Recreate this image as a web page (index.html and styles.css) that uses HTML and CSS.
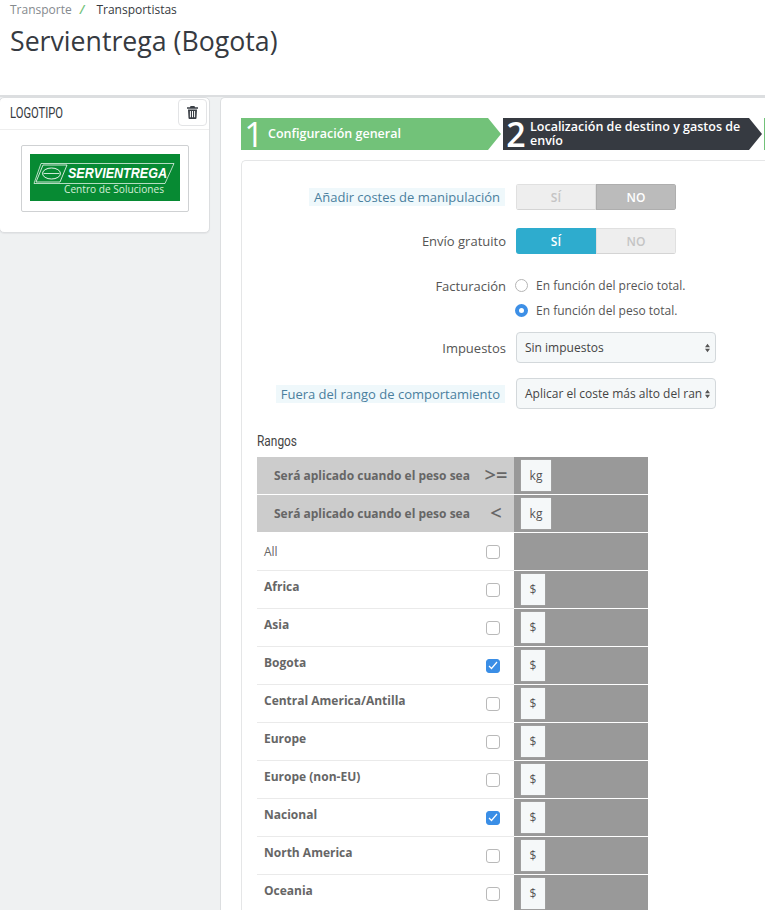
FILE: index.html
```html
<!DOCTYPE html>
<html lang="es">
<head>
<meta charset="utf-8">
<title>Servientrega (Bogota)</title>
<link rel="stylesheet" href="styles.css">
</head>
<body>
<header class="page-head">
  <nav class="crumbs"><span class="crumb-muted">Transporte</span><span class="crumb-sep">/</span><span>Transportistas</span></nav>
  <h1 class="title">Servientrega (Bogota)</h1>
</header>
<div class="layout">
  <aside class="logo-panel">
    <div class="logo-head">
      <span class="logo-title">LOGOTIPO</span>
      <button class="trash" type="button" aria-label="Eliminar">
        <svg width="11" height="13" viewBox="0 0 11 13"><path fill="#3a3f45" d="M3.6 0h3.800l.7 1.300H11v1.400H0V1.300h2.900zM1 3.400h9l-.5 8.600a1 1 0 0 1-1 1h-6a1 1 0 0 1-1-1zm1.900 1.500v6.400h1V4.900zm2.100 0v6.400h1V4.900zm2.100 0v6.400h1V4.900z"/></svg>
      </button>
    </div>
    <div class="logo-body">
      <div class="logo-frame">
        <svg class="logo-svg" width="150" height="47" viewBox="0 0 150 47">
          <rect width="150" height="47" fill="#078a33"/>
          <path d="M11 9.500h133l-9 20H4z" fill="none" stroke="#fff" stroke-width=".7"/>
          <path d="M13 11h24l-7 17H6z" fill="none" stroke="#fff" stroke-width=".8"/>
          <ellipse cx="21.500" cy="19.500" rx="9" ry="5.500" fill="none" stroke="#fff" stroke-width=".9"/>
          <path d="M13.500 19.500h16" stroke="#fff" stroke-width=".8"/>
          <text x="38" y="24" class="logo-name" textLength="99" lengthAdjust="spacingAndGlyphs">SERVIENTREGA</text>
          <text x="34" y="38.500" class="logo-sub" textLength="100" lengthAdjust="spacingAndGlyphs">Centro de Soluciones</text>
        </svg>
      </div>
    </div>
  </aside>
  <main class="main-panel">
    <div class="steps">
      <div class="step step-green"><span class="step-num">1</span><span class="step-text">Configuración general</span></div>
      <div class="step step-dark"><span class="step-num">2</span><span class="step-text step-text-tight">Localización de destino y gastos de envío</span></div>
      <div class="step-next"></div>
    </div>
    <section class="form-card">
      <div class="form-row row-toggle-1">
        <div class="label-cell"><span class="label hint">Añadir costes de manipulación</span></div>
        <div class="toggle"><span class="seg seg-off">SÍ</span><span class="seg seg-no">NO</span></div>
      </div>
      <div class="form-row row-toggle-2">
        <div class="label-cell"><span class="label">Envío gratuito</span></div>
        <div class="toggle"><span class="seg seg-yes">SÍ</span><span class="seg seg-off">NO</span></div>
      </div>
      <div class="form-row row-radio">
        <div class="label-cell"><span class="label">Facturación</span></div>
        <div class="radios">
          <div class="radio-line"><span class="radio"></span>En función del precio total.</div>
          <div class="radio-line"><span class="radio radio-on"></span>En función del peso total.</div>
        </div>
      </div>
      <div class="form-row row-select-1">
        <div class="label-cell"><span class="label">Impuestos</span></div>
        <div class="select"><span class="select-text">Sin impuestos</span><svg class="arrows" width="5" height="10" viewBox="0 0 6 10"><path fill="#555" d="M3 0l3 4H0zM3 10L0 6h6z"/></svg></div>
      </div>
      <div class="form-row row-select-2">
        <div class="label-cell"><span class="label hint">Fuera del rango de comportamiento</span></div>
        <div class="select"><span class="select-text">Aplicar el coste más alto del ran</span><svg class="arrows" width="5" height="10" viewBox="0 0 6 10"><path fill="#555" d="M3 0l3 4H0zM3 10L0 6h6z"/></svg></div>
      </div>
      <h2 class="ranges-title">Rangos</h2>
      <div class="ranges">
        <div class="r-row r-head"><div class="r-left"><span class="r-condition">Será aplicado cuando el peso sea</span><span class="r-op">&gt;=</span></div><div class="r-right"><span class="unit unit-kg">kg</span></div></div>
        <div class="r-row r-head"><div class="r-left"><span class="r-condition">Será aplicado cuando el peso sea</span><span class="r-op">&lt;</span></div><div class="r-right"><span class="unit unit-kg">kg</span></div></div>
        <div class="r-row"><div class="r-left"><span class="r-all">All</span><span class="check"></span></div><div class="r-right"></div></div>
        <div class="r-row"><div class="r-left"><span class="r-zone">Africa</span><span class="check"></span></div><div class="r-right"><span class="unit">$</span></div></div>
        <div class="r-row"><div class="r-left"><span class="r-zone">Asia</span><span class="check"></span></div><div class="r-right"><span class="unit">$</span></div></div>
        <div class="r-row"><div class="r-left"><span class="r-zone">Bogota</span><span class="check check-on"><svg width="10" height="9" viewBox="0 0 10 9"><path d="M1 5l2.500 2.500L9 1" fill="none" stroke="#fff" stroke-width="1.200"/></svg></span></div><div class="r-right"><span class="unit">$</span></div></div>
        <div class="r-row"><div class="r-left"><span class="r-zone">Central America/Antilla</span><span class="check"></span></div><div class="r-right"><span class="unit">$</span></div></div>
        <div class="r-row"><div class="r-left"><span class="r-zone">Europe</span><span class="check"></span></div><div class="r-right"><span class="unit">$</span></div></div>
        <div class="r-row"><div class="r-left"><span class="r-zone">Europe (non-EU)</span><span class="check"></span></div><div class="r-right"><span class="unit">$</span></div></div>
        <div class="r-row"><div class="r-left"><span class="r-zone">Nacional</span><span class="check check-on"><svg width="10" height="9" viewBox="0 0 10 9"><path d="M1 5l2.500 2.500L9 1" fill="none" stroke="#fff" stroke-width="1.200"/></svg></span></div><div class="r-right"><span class="unit">$</span></div></div>
        <div class="r-row"><div class="r-left"><span class="r-zone">North America</span><span class="check"></span></div><div class="r-right"><span class="unit">$</span></div></div>
        <div class="r-row"><div class="r-left"><span class="r-zone">Oceania</span><span class="check"></span></div><div class="r-right"><span class="unit">$</span></div></div>
      </div>
    </section>
  </main>
</div>
</body>
</html>
```
FILE: styles.css
```css
* { box-sizing: border-box; }
html, body { margin: 0; padding: 0; height: 910px; overflow: hidden; }
body { background: #eff1f2; font-family: "Open Sans", "Liberation Sans", sans-serif; color: #555; font-size: 12px; }

.page-head { height: 97px; background: #fff; border-bottom: 2px solid #dcdee0; padding: 2px 10px 0; }
.crumbs { font-size: 12px; line-height: 15px; color: #363a41; }
.crumb-muted { color: #858a8e; }
.crumb-sep { color: #72c279; font-weight: 600; margin: 0 12px 0 8px; font-style: italic; }
.title { margin: 4px 0 0; font-size: 26.700px; line-height: 40px; font-weight: 400; color: #363a41; }

.layout { display: flex; align-items: flex-start; }
.logo-panel { flex: none; width: 211px; height: 136px; background: #fff; border: 1px solid #dcdee0; border-radius: 5px; margin-left: -1px; box-shadow: 0 1px 1px #e3e5e7; }
.logo-head { height: 32px; display: flex; align-items: center; justify-content: space-between; padding: 0 2px 2px 10px; border-bottom: 1px solid #eeeeee; }
.logo-title { display: inline-block; transform: scaleX(.8); transform-origin: left center; font-family: "Roboto", sans-serif; font-weight: 400; font-size: 14px; color: #363a41; }
.trash { width: 29px; height: 27px; padding: 0; display: flex; align-items: center; justify-content: center; background: #fff; border: 1px solid #e3e4e6; border-radius: 4px; }
.logo-body { padding: 15px 0 0 21px; }
.logo-frame { width: 168px; height: 67px; padding: 8px; border: 1px solid #cfd1d3; border-radius: 2px; }
.logo-svg { display: block; }
.logo-name { font: italic 700 14px "Liberation Sans", sans-serif; fill: #fff; }
.logo-sub { font: 400 10px "Open Sans", sans-serif; fill: #d6efd9; }

.main-panel { flex: none; margin-left: 10px; width: 545px; height: 813px; overflow: hidden; padding: 20px 0 0 20px; background: #fff; border: 1px solid #dcdee0; border-right: 0; border-bottom: 0; border-radius: 5px 0 0 0; }
.steps { display: flex; height: 32px; }
.step { display: flex; align-items: center; color: #fff; flex: none; padding-left: 3px; }
.step-green { width: 260px; background: #72c279; clip-path: polygon(0 0, 247px 0, 260px 50%, 247px 100%, 0 100%); }
.step-dark { width: 259px; margin-left: 2px; background: #363a41; clip-path: polygon(0 0, 246px 0, 259px 50%, 246px 100%, 0 100%); }
.step-next { flex: 1; margin-left: 2px; background: #72c279; }
.step-num { width: 20px; margin-right: 4px; font-size: 34px; line-height: 32px; font-weight: 600; text-align: center; }
.step-green .step-num { font-weight: 500; }
.step-text { font-size: 12.500px; font-weight: 600; line-height: 14px; }
.step-text-tight { width: 225px; }

.form-card { margin-top: 10px; height: 800px; border: 1px solid #e5e6e7; border-right: 0; border-radius: 5px 0 0 0; padding: 0 0 0 15px; }
.form-row { display: flex; align-items: center; }
.label-cell { flex: none; width: 259px; padding-right: 10px; display: flex; justify-content: flex-end; }
.label { text-align: right; font-size: 13px; line-height: 18px; color: #555; white-space: nowrap; }
.hint { padding: 0 5px; margin-right: 1px; background: #eff8fb; color: #4a7f9e; }
.row-toggle-1 { margin-top: 23px; }
.row-toggle-2 { margin-top: 18px; }
.row-radio { margin-top: 23px; align-items: flex-start; }
.row-select-1 { margin-top: 13px; }
.row-select-2 { margin-top: 15px; }

.toggle { width: 160px; height: 26px; display: flex; border-radius: 3px; overflow: hidden; font-size: 12px; font-weight: 600; flex: none; }
.seg { width: 80px; height: 100%; display: flex; align-items: center; justify-content: center; }
.seg-off { background: #eeeeee; color: #c4c4c4; border: 1px solid #e0e0e0; border-bottom-color: #d4d4d4; }
.seg-no { background: #bbbbbb; color: #fff; border: 1px solid #aeaeae; }
.seg-yes { background: #2eacce; color: #fff; }

.radios { display: flex; flex-direction: column; gap: 8px; margin-left: -1px; }
.radio-line { display: flex; align-items: center; height: 17px; color: #555; font-size: 12px; }
.radio { width: 13px; height: 13px; margin-right: 8px; border: 1px solid #b5b5b5; border-radius: 50%; background: #fff; flex: none; }
.radio-on { border: 4.500px solid #3d8fe6; }

.select { width: 200px; height: 31px; display: flex; align-items: center; justify-content: space-between; padding: 0 5px 0 8px; background: #f5f8f9; border: 1px solid #d3d8db; border-radius: 4px; color: #444; font-size: 12px; flex: none; }
.select-text { white-space: nowrap; }
.arrows { flex: none; }

.ranges-title { margin: 23px 0 0; font-family: "Roboto", sans-serif; font-size: 14px; line-height: 18px; font-weight: 400; color: #444; display: block; transform: scaleX(.85); transform-origin: left center; }
.ranges { margin-top: 7px; width: 391px; }
.r-row { display: grid; grid-template-columns: 257px 134px; height: 38px; }
.r-left { display: flex; align-items: center; justify-content: space-between; padding: 0 14px 0 7px; border-bottom: 1px solid #eaeaea; }
.r-right { display: flex; align-items: center; padding: 0 0 0 7px; background: #999; border-bottom: 1px solid #fff; }
.r-head .r-left { background: #ccc; border-bottom-color: #fff; padding: 0 5px 0 17px; }
.r-condition { font-size: 12px; font-weight: 700; color: #666; }
.r-op { font-size: 20px; font-weight: 600; color: #666; line-height: 20px; width: 26px; text-align: center; position: relative; bottom: 1px; }
.r-all { font-size: 12px; color: #666; }
.r-zone { font-size: 12px; font-weight: 700; color: #666; position: relative; bottom: 3px; }
.check { width: 14px; height: 14px; border: 1px solid #b9b9b9; border-radius: 3px; background: #fff; display: flex; align-items: center; justify-content: center; }
.check-on { background: #3a8ee6; border-color: #3a8ee6; }
.unit { width: 24px; height: 31px; display: flex; align-items: center; justify-content: center; background: #f5f8f9; color: #555; font-size: 12px; box-shadow: 0 0 1px #bbb; }
.unit-kg { width: 30px; }
```
